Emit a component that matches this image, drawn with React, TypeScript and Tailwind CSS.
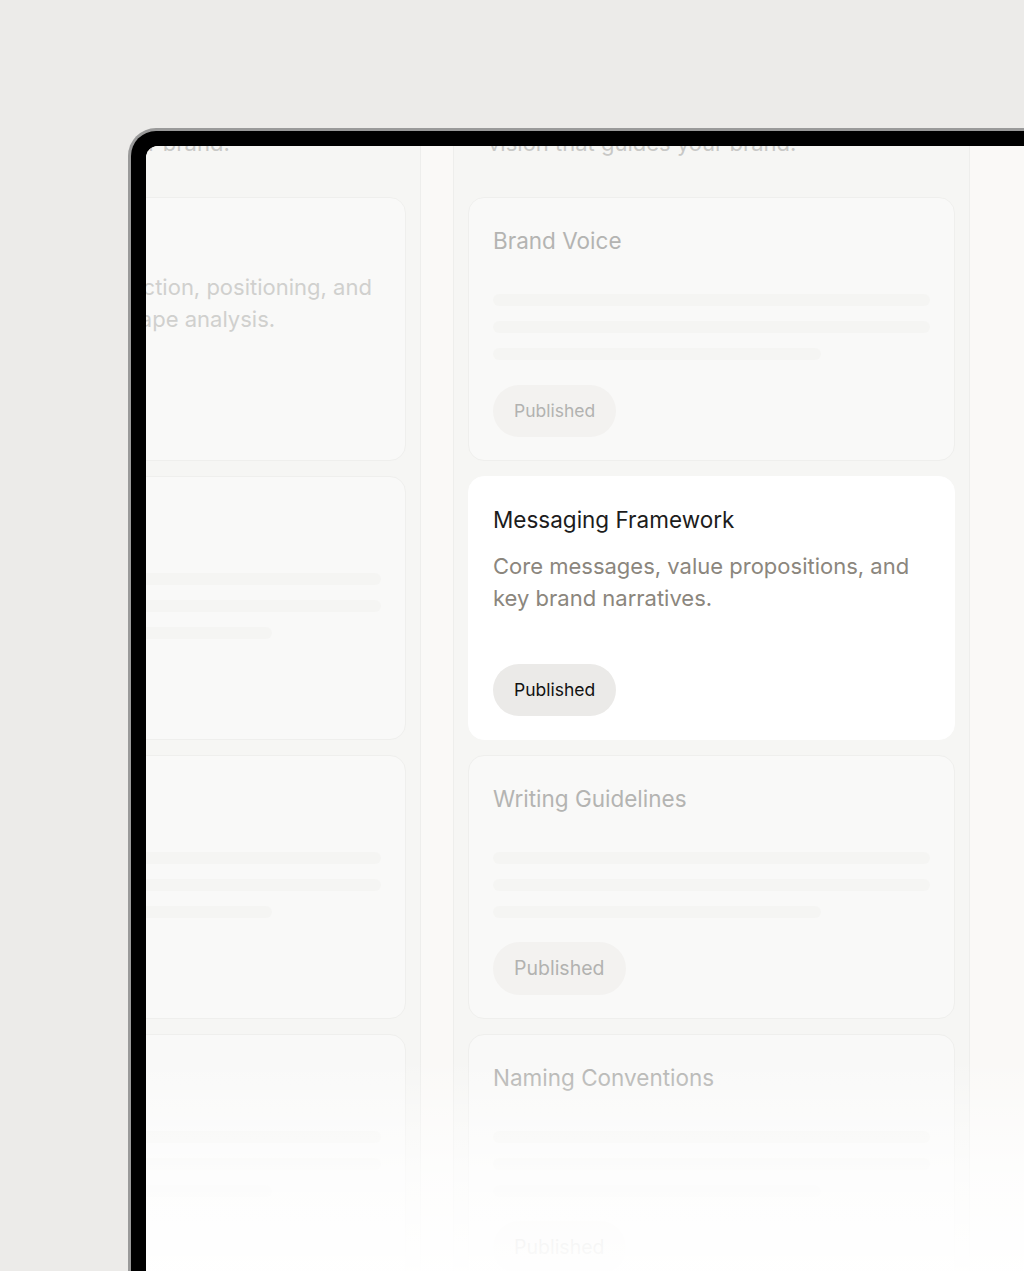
import React from 'react';

interface CardData {
  title: string;
  desc?: string[];
  active?: boolean;
  big?: boolean;
}

const font = { fontFamily: 'Inter, "Noto Sans", sans-serif' };

const leftCards: CardData[] = [
  { title: 'Positioning', desc: ['User research, direction, positioning, and', 'competitive landscape analysis.'] },
  { title: 'Mission' },
  { title: 'Values' },
  { title: 'Audience' },
];

const rightCards: CardData[] = [
  { title: 'Brand Voice' },
  { title: 'Messaging Framework', desc: ['Core messages, value propositions, and', 'key brand narratives.'], active: true },
  { title: 'Writing Guidelines', big: true },
  { title: 'Naming Conventions', big: true },
];

const Skeleton: React.FC = () => (
  <div className="mt-[37px] flex flex-col gap-[15px]">
    <div className="h-[12px] w-full rounded-full bg-[#f5f5f3]"></div>
    <div className="h-[12px] w-full rounded-full bg-[#f5f5f3]"></div>
    <div className="h-[12px] w-[75%] rounded-full bg-[#f5f5f3]"></div>
  </div>
);

const Card: React.FC<{ card: CardData }> = ({ card }) => {
  const { title, desc, active, big } = card;
  return (
    <div
      className={`flex h-[264px] shrink-0 flex-col rounded-[16px] border px-[24px] pb-[23px] pt-[27px] ${
        active ? 'border-white bg-white' : 'border-[#efefed] bg-[#f9f9f8]'
      }`}
    >
      <div className={`text-[22.5px] leading-[32px] whitespace-nowrap ${active ? 'text-[#1c1c1c]' : 'text-[#b4b4b2]'}`}>
        {title}
      </div>

      {desc ? (
        <div
          className={`mt-[14px] text-[22px] leading-[32px] whitespace-nowrap ${
            active ? 'text-[#8b867d]' : 'text-[#d0d0ce]'
          }`}
        >
          {desc[0]}
          <br />
          {desc[1]}
        </div>
      ) : (
        <Skeleton />
      )}

      <div
        className={`mt-auto inline-flex w-fit items-center rounded-full px-[21px] ${
          big ? 'h-[53px] text-[19.5px]' : 'h-[52px] text-[17.5px]'
        } ${active ? 'bg-[#ebeae8] text-[#111111]' : 'bg-[#f3f2f0] text-[#b2b2b0]'}`}
      >
        Published
      </div>
    </div>
  );
};

const Column: React.FC<{ heading: string; lines: string[]; cards: CardData[] }> = ({ heading, lines, cards }) => (
  <div className="flex w-[517px] shrink-0 flex-col border-x border-[#eeeeec] bg-[#f6f6f4] px-[14px]">
    {/* column header, mostly hidden behind the bezel */}
    <div className="pl-[20px]">
      <div className="text-[22.5px] leading-[32px] text-[#b4b4b2] whitespace-nowrap">{heading}</div>
      <div className="mt-[17px] text-[22px] leading-[32px] text-[#c8c8c6] whitespace-nowrap">
        {lines[0]}
        <br />
        {lines[1]}
      </div>
    </div>

    <div className="mt-[38px] flex flex-col gap-[15px]">
      {cards.map((c) => (
        <Card key={c.title} card={c} />
      ))}
    </div>
  </div>
);

export default function App() {
  return (
    <div className="h-[1271px] w-[1024px] overflow-hidden bg-[#ecebe9] pl-[128px] pt-[128px]" style={font}>
      {/* device bezel */}
      <div className="h-[1160px] rounded-tl-[28px] bg-[#9a9a9a] pl-[3px] pt-[3px]">
        <div className="h-full rounded-tl-[25px] bg-black pl-[15px] pt-[15px]">
          <div className="relative h-full overflow-hidden rounded-tl-[12px] bg-[#faf9f7]">
            <div className="-ml-[242px] -mt-[100px] flex gap-[32px]">
              <Column
                heading="Brand Foundation"
                lines={['Foundations that define the purpose and', 'the key value of your brand.']}
                cards={leftCards}
              />
              <Column
                heading="Voice & Tone"
                lines={['The personality, tone, and long-term', 'vision that guides your brand.']}
                cards={rightCards}
              />
            </div>

            {/* bottom fade */}
            <div className="pointer-events-none absolute inset-x-0 bottom-0 h-[230px] bg-gradient-to-b from-white/0 via-white/70 to-white"></div>
          </div>
        </div>
      </div>
    </div>
  );
}
